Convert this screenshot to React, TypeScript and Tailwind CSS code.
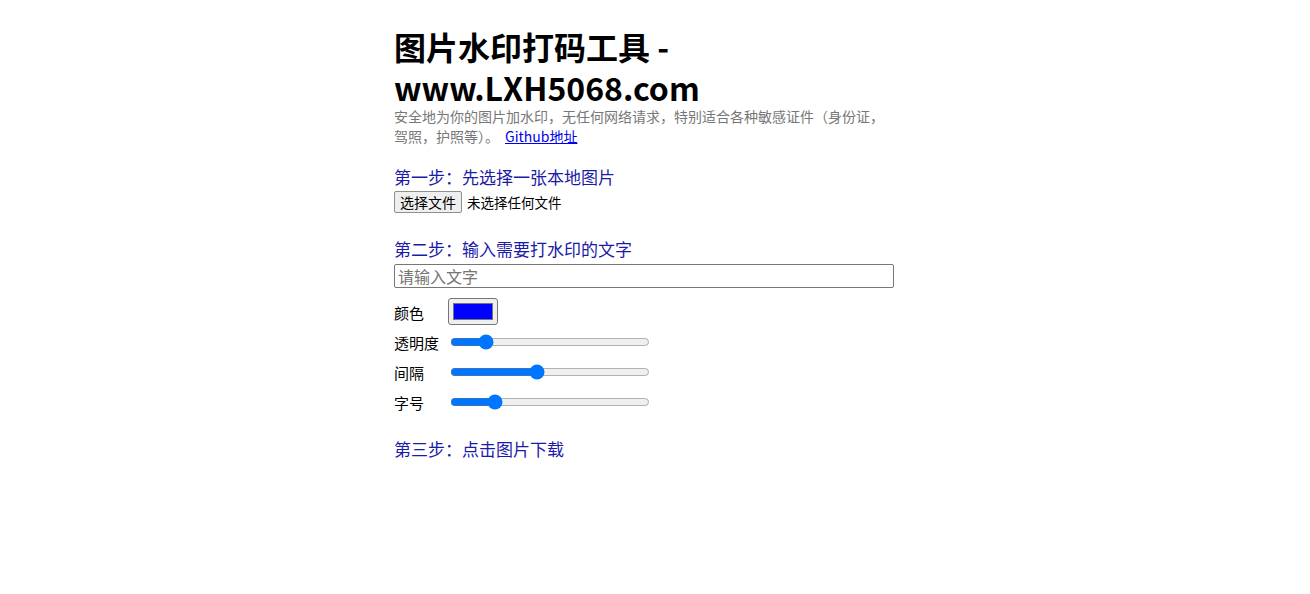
import React from "react";

const font = {
  fontFamily: '"Noto Sans CJK SC", "Noto Sans", sans-serif',
};

const Slider = ({ value }: { value: number }) => (
  <input
    type="range"
    min={0}
    max={100}
    defaultValue={value}
    className="w-[200px] accent-[#0075ff]"
  />
);

const App: React.FC = () => {
  return (
    <div className="min-h-[594px] bg-white text-black" style={font}>
      <div className="mx-auto w-[522px] pt-[26px] pr-[22px]">
        <h1 className="text-[32px] font-bold leading-[41px]">
          图片水印打码工具 - www.LXH5068.com
        </h1>
        <p className="mt-[-2px] text-[14px] leading-[20px] text-[#777]">
          安全地为你的图片加水印，无任何网络请求，特别适合各种敏感证件（身份证，驾照，护照等）。
          <a href="#" className="ml-[6px] text-[#0000ee] underline">
            Github地址
          </a>
        </p>

        <h3 className="mt-[18px] text-[17px] leading-[26px] text-[#1b1ba6]">
          第一步：先选择一张本地图片
        </h3>
        <div className="mt-[1px] flex items-center gap-[5px] text-[13.5px]">
          <button className="h-[22px] rounded-[2px] border border-[#8f8f8f] bg-[#efefef] px-[5px] text-[14px] leading-none">
            选择文件
          </button>
          <span>未选择任何文件</span>
        </div>

        <h3 className="mt-[23px] text-[17px] leading-[26px] text-[#1b1ba6]">
          第二步：输入需要打水印的文字
        </h3>
        <input
          type="text"
          placeholder="请输入文字"
          className="mt-[2px] h-[24px] w-[500px] rounded-[2px] border border-[#767676] px-[3px] text-[16px] placeholder:text-[#757575]"
        />

        <div className="mt-[10px] flex flex-col gap-[3px] text-[15px]">
          <div className="flex h-[27px] items-center">
            <span className="w-[54px] pt-[4px]">颜色</span>
            <div className="flex h-[27px] w-[50px] items-center justify-center rounded-[3px] border border-[#767676] bg-[#efefef]">
              <div className="h-[17px] w-[40px] border border-[#777] bg-[#0000ff]" />
            </div>
          </div>
          <div className="flex h-[27px] items-center">
            <span className="w-[56px] pt-[4px]">透明度</span>
            <Slider value={15} />
          </div>
          <div className="flex h-[27px] items-center">
            <span className="w-[56px] pt-[4px]">间隔</span>
            <Slider value={43} />
          </div>
          <div className="flex h-[27px] items-center">
            <span className="w-[56px] pt-[4px]">字号</span>
            <Slider value={20} />
          </div>
        </div>

        <h3 className="mt-[21px] text-[17px] leading-[26px] text-[#1b1ba6]">
          第三步：点击图片下载
        </h3>
      </div>
    </div>
  );
};

export default App;
